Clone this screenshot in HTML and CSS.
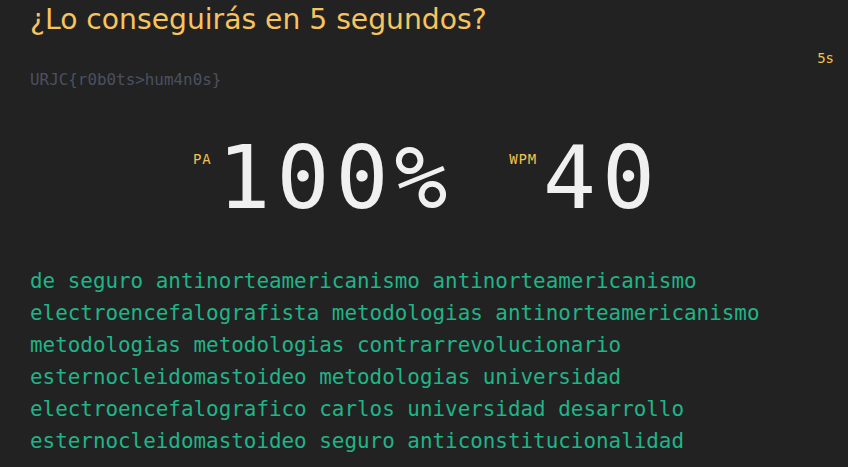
FILE: index.html
```html
<!DOCTYPE html>
<html lang="es">
<head>
<meta charset="utf-8">
<link rel="stylesheet" href="styles.css">
</head>
<body>
<main class="page">
  <h1 class="title">¿Lo conseguirás en 5 segundos?</h1>
  <div class="timer">5s</div>
  <div class="flag">URJC{r0b0ts&gt;hum4n0s}</div>
  <section class="stats">
    <div class="stat">
      <span class="stat-label">PA</span>
      <span class="stat-value">100%</span>
    </div>
    <div class="stat">
      <span class="stat-label">WPM</span>
      <span class="stat-value">40</span>
    </div>
  </section>
  <p class="words">de seguro antinorteamericanismo antinorteamericanismo electroencefalografista metodologias antinorteamericanismo metodologias metodologias contrarrevolucionario esternocleidomastoideo metodologias universidad electroencefalografico carlos universidad desarrollo esternocleidomastoideo seguro anticonstitucionalidad</p>
</main>
</body>
</html>
```
FILE: styles.css
```css
html, body {
  margin: 0;
  padding: 0;
  background: #222222;
}
.page {
  padding: 0 30px;
  height: 467px;
  box-sizing: border-box;
  overflow: hidden;
}
.title {
  margin: 0;
  padding-top: 2px;
  font-family: "DejaVu Sans", sans-serif;
  font-weight: normal;
  font-size: 28.2px;
  line-height: 36px;
  color: #f7c45e;
}
.timer {
  margin-top: 10px;
  margin-right: -16px;
  text-align: right;
  font-family: "DejaVu Sans Mono", monospace;
  font-size: 14px;
  line-height: 20px;
  color: #f2c14e;
}
.flag {
  margin-top: 2px;
  font-family: "DejaVu Sans Mono", monospace;
  font-size: 15.9px;
  line-height: 20px;
  color: #4b5060;
}
.stats {
  display: flex;
  justify-content: center;
  gap: 62px;
  margin-top: 40px;
}
.stat {
  display: flex;
  align-items: flex-start;
  gap: 6px;
}
.stat-label {
  margin-top: 21px;
  font-family: "DejaVu Sans Mono", monospace;
  font-size: 14px;
  letter-spacing: 0.8px;
  color: #f2c14e;
}
.stat-value {
  font-family: "DejaVu Sans Mono", monospace;
  font-size: 88px;
  line-height: 96px;
  letter-spacing: 6px;
  margin-right: -6px;
  color: #f0f0f0;
}
.words {
  margin: 39px 0 0;
  font-family: "DejaVu Sans Mono", monospace;
  font-size: 20.9px;
  line-height: 32px;
  color: #20b487;
}
```
